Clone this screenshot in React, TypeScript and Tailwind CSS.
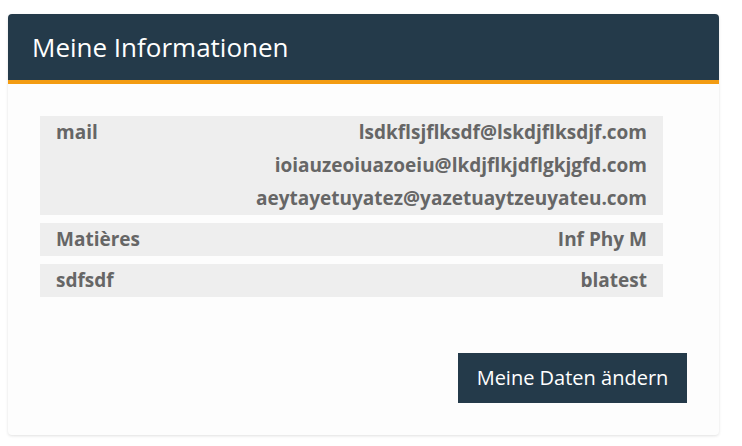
import React from "react";

const rows = [
    { label: "mail", values: ["lsdkflsjflksdf@lskdjflksdjf.com", "ioiauzeoiuazoeiu@lkdjflkjdflgkjgfd.com", "aeytayetuyatez@yazetuaytzeuyateu.com"] },
    { label: "Matières", values: ["Inf Phy M"] },
    { label: "sdfsdf", values: ["blatest"] },
];

const App = () => {
    return (
        <div className="w-[742px] h-[446px] bg-white pt-[14px] pl-2" style={{ fontFamily: "'Open Sans', sans-serif" }}>
            <div className="w-[711px] h-[421px] rounded bg-[#fdfdfd] shadow-[0_1px_3px_rgba(0,0,0,0.12)] flex flex-col overflow-hidden">
                <div className="h-[70px] bg-[#243a4a] border-b-4 border-[#f39c12] flex items-center px-6">
                    <h1 className="text-[26px] text-white leading-none">Meine Informationen</h1>
                </div>
                <div className="flex flex-col p-8 flex-1">
                    <div className="w-[623px] flex flex-col gap-2">
                        {rows.map((row) => (
                            <div key={row.label} className="flex justify-between bg-[#eeeeee] px-4 text-[#666666] font-bold text-[19px] leading-[33px]">
                                <span>{row.label}</span>
                                <div className="flex flex-col items-end">
                                    {row.values.map((v) => (
                                        <span key={v}>{v}</span>
                                    ))}
                                </div>
                            </div>
                        ))}
                    </div>
                    <div className="flex-1" />
                    <div className="flex justify-end">
                        <button className="w-[229px] h-[50px] bg-[#243a4a] text-white text-[20px]">Meine Daten ändern</button>
                    </div>
                </div>
            </div>
        </div>
    );
};

export default App;
